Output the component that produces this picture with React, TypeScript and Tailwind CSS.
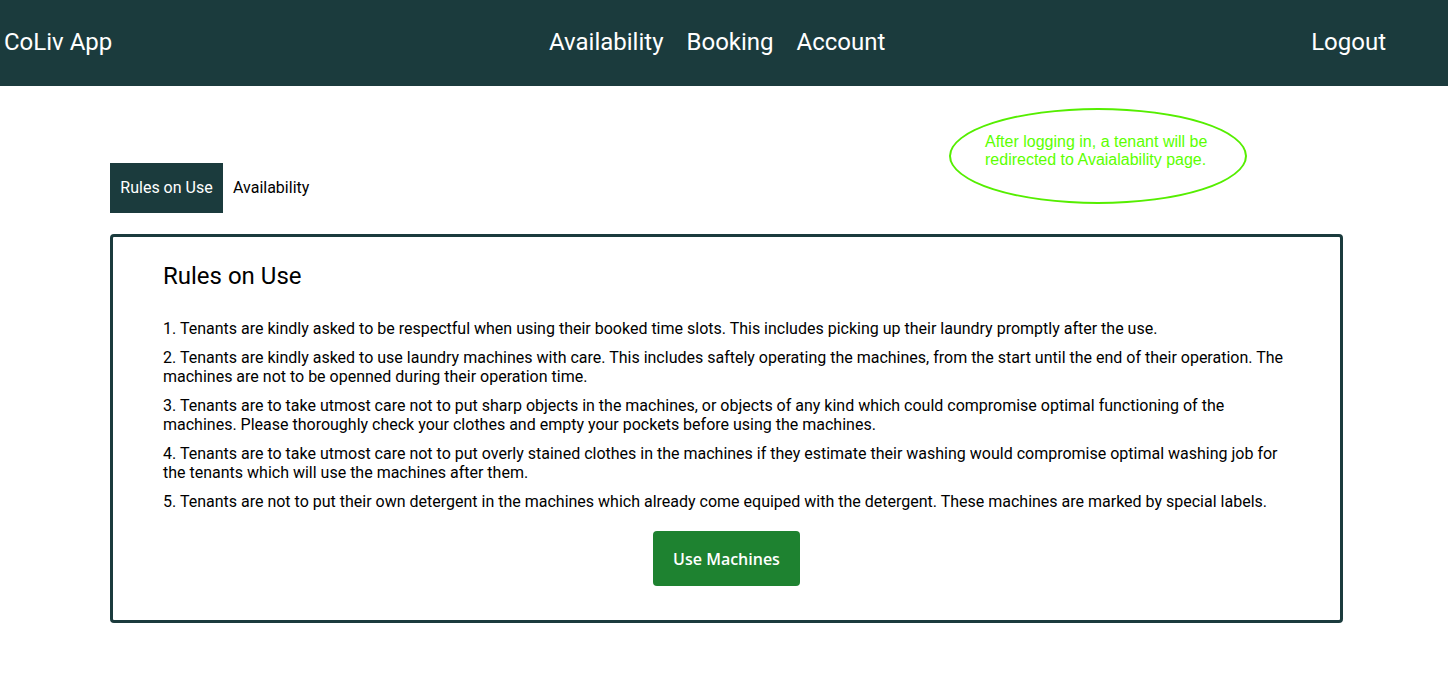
const rules = [
  'Tenants are kindly asked to be respectful when using their booked time slots. This includes picking up their laundry promptly after the use.',
  'Tenants are kindly asked to use laundry machines with care. This includes saftely operating the machines, from the start until the end of their operation. The machines are not to be openned during their operation time.',
  'Tenants are to take utmost care not to put sharp objects in the machines, or objects of any kind which could compromise optimal functioning of the machines. Please thoroughly check your clothes and empty your pockets before using the machines.',
  'Tenants are to take utmost care not to put overly stained clothes in the machines if they estimate their washing would compromise optimal washing job for the tenants which will use the machines after them.',
  'Tenants are not to put their own detergent in the machines which already come equiped with the detergent. These machines are marked by special labels.',
];

function Header() {
  return (
    <header className="h-[86px] bg-[#1b3b3d] text-white flex items-center pl-[4px] pr-[62px] pb-[2px] text-[24px]">
      <div className="w-[545px]">CoLiv App</div>
      <nav className="flex gap-[23px]">
        <a>Availability</a>
        <a>Booking</a>
        <a>Account</a>
      </nav>
      <div className="flex-1 text-right">Logout</div>
    </header>
  );
}

export default function App() {
  return (
    <div className="relative min-h-[694px] bg-white font-['Roboto',sans-serif] text-black">
      <Header />

      <div className="absolute left-[949px] top-[108px] w-[298px] h-[96px] rounded-[50%] border-2 border-[#55ee00] font-['Liberation_Sans',Arial,sans-serif] text-[16px] leading-[18px] text-[#5cff00] pl-[34px] pt-[23px]">
        After logging in, a tenant will be
        <br />
        redirected to Avaialability page.
      </div>

      <main className="pl-[110px] pr-[105px] pt-[77px] pb-[70px]">
        <div className="flex text-[16px]">
          <button className="h-[50px] px-[10px] w-[113px] bg-[#1b3b3d] text-white">Rules on Use</button>
          <button className="h-[50px] px-[10px]">Availability</button>
        </div>

        <section className="mt-[21px] border-[3px] border-[#1b3b3d] rounded-[4px] pl-[50px] pr-[54px] pt-[24px] pb-[34px]">
          <h2 className="text-[24px] leading-[30px]">Rules on Use</h2>
          <ol className="mt-[28px] flex flex-col gap-[10px] text-[16px] leading-[19px]">
            {rules.map((r, i) => (
              <li key={i}>
                {i + 1}. {r}
              </li>
            ))}
          </ol>
          <div className="flex justify-center mt-[20px] pl-[4px]">
            <button className="w-[147px] h-[55px] rounded-[4px] bg-[#1e8230] text-white text-[16px] font-semibold font-['Open_Sans',sans-serif]">
              Use Machines
            </button>
          </div>
        </section>
      </main>
    </div>
  );
}
